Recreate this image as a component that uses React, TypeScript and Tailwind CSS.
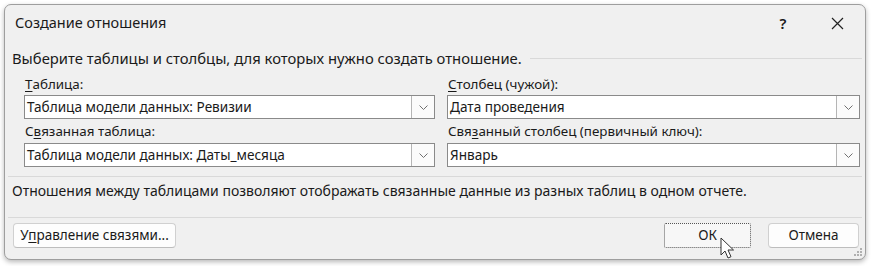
import React from "react";

const font = { fontFamily: '"Noto Sans", "Liberation Sans", sans-serif' };

function Chevron() {
  return (
    <svg width="9" height="5" viewBox="0 0 9 5" className="text-[#707070]">
      <path d="M0.5 0.5l4 4 4-4" fill="none" stroke="currentColor" strokeWidth="1" />
    </svg>
  );
}

function Dropdown({ value }: { value: string }) {
  return (
    <div className="flex h-[24px] items-stretch border border-[#8a8a8a] bg-white">
      <div className="flex flex-1 items-center pl-[2px] text-[13.6px] text-[#1a1a1a]">{value}</div>
      <div className="flex w-[23px] items-center justify-center border-l border-[#b5b5b5] bg-[#fbfbfb]">
        <Chevron />
      </div>
    </div>
  );
}

function Label({ before, hot, after }: { before?: string; hot: string; after: string }) {
  return (
    <div className="flex items-center pl-[1px] text-[13.4px] text-[#1a1a1a]">
      {before}
      <span className="underline underline-offset-[2px]">{hot}</span>
      {after}
    </div>
  );
}

function Cursor() {
  return (
    <svg width="14" height="22" viewBox="0 0 14 22" className="absolute left-[720px] top-[237px]">
      <path
        d="M1 1v17l4-4 3 7 3-1.3-3-6.7h5.5z"
        fill="#fff"
        stroke="#333"
        strokeWidth="1"
        strokeLinejoin="round"
      />
    </svg>
  );
}

function Grip() {
  return (
    <svg width="8" height="8" viewBox="0 0 8 8" className="absolute right-[3px] bottom-[3px]">
      {[
        [6, 0],
        [6, 3],
        [3, 3],
        [6, 6],
        [3, 6],
        [0, 6],
      ].map(([x, y], i) => (
        <rect key={i} x={x} y={y} width="2" height="2" fill="#b0b0b0" />
      ))}
    </svg>
  );
}

export default function App() {
  return (
    <div className="relative h-[266px] w-[872px] bg-white pl-[4px] pt-[4px]" style={font}>
      <div className="relative flex h-[256px] w-[862px] flex-col rounded-[7px] border border-[#9e9e9e] bg-[#f0f0f0] shadow-[0_2px_5px_rgba(0,0,0,0.28)]">
        {/* title bar */}
        <div className="flex h-[35px] items-center pt-[1px] pl-[10px] text-[14.5px] text-[#1a1a1a]">
          <span className="flex-1">Создание отношения</span>
          <span className="w-[20px] text-center text-[15px] font-semibold">?</span>
          <span className="flex w-[72px] items-center justify-center pr-[14px] pl-[30px]">
            <svg width="13" height="13" viewBox="0 0 13 13">
              <path d="M1 1l11 11M12 1L1 12" stroke="#222" strokeWidth="1.2" />
            </svg>
          </span>
        </div>

        <div className="mt-[7px] flex h-[22px] items-center pl-[7px] pr-[3px] text-[14.8px] text-[#1a1a1a]">
          <span>Выберите таблицы и столбцы, для которых нужно создать отношение.</span>
          <span className="ml-[8px] h-px flex-1 bg-[#d9d9d9]" />
        </div>

        <div className="mt-[5px] flex gap-[12px] pl-[19px]">
          <div className="flex w-[411px] flex-col">
            <div className="h-[21px]">
              <Label hot="Т" after="аблица:" />
            </div>
            <Dropdown value="Таблица модели данных: Ревизии" />
            <div className="flex h-[24px] items-center">
              <Label before="С" hot="в" after="язанная таблица:" />
            </div>
            <Dropdown value="Таблица модели данных: Даты_месяца" />
          </div>
          <div className="flex w-[413px] flex-col">
            <div className="h-[21px]">
              <Label hot="С" after="толбец (чужой):" />
            </div>
            <Dropdown value="Дата проведения" />
            <div className="flex h-[24px] items-center">
              <Label before="Свя" hot="з" after="анный столбец (первичный ключ):" />
            </div>
            <Dropdown value="Январь" />
          </div>
        </div>

        <div className="mx-[3px] mt-[9px] h-px bg-[#d9d9d9]" />
        <div className="flex h-[26px] items-center pl-[7px] text-[14px] text-[#1a1a1a]">
          Отношения между таблицами позволяют отображать связанные данные из разных таблиц в одном отчете.
        </div>
        <div className="mx-[3px] mt-[14px] h-px bg-[#d9d9d9]" />

        <div className="mt-[5px] flex items-center pl-[8px] pr-[6px] text-[13.5px] text-[#1a1a1a]">
          <button className="h-[25px] w-[163px] rounded-[4px] border border-[#d0d0d0] border-b-[#bdbdbd] bg-[#fdfdfd]">
            У<span className="underline underline-offset-[2px]">п</span>равление связями...
          </button>
          <div className="flex-1" />
          <button className="h-[25px] w-[87px] rounded-[2px] border border-dotted border-[#555] bg-[#f7f7f7]">
            ОК
          </button>
          <button className="ml-[17px] h-[25px] w-[91px] rounded-[4px] border border-[#d0d0d0] border-b-[#bdbdbd] bg-[#fdfdfd]">
            Отмена
          </button>
        </div>
        <Grip />
      </div>
      <Cursor />
    </div>
  );
}
